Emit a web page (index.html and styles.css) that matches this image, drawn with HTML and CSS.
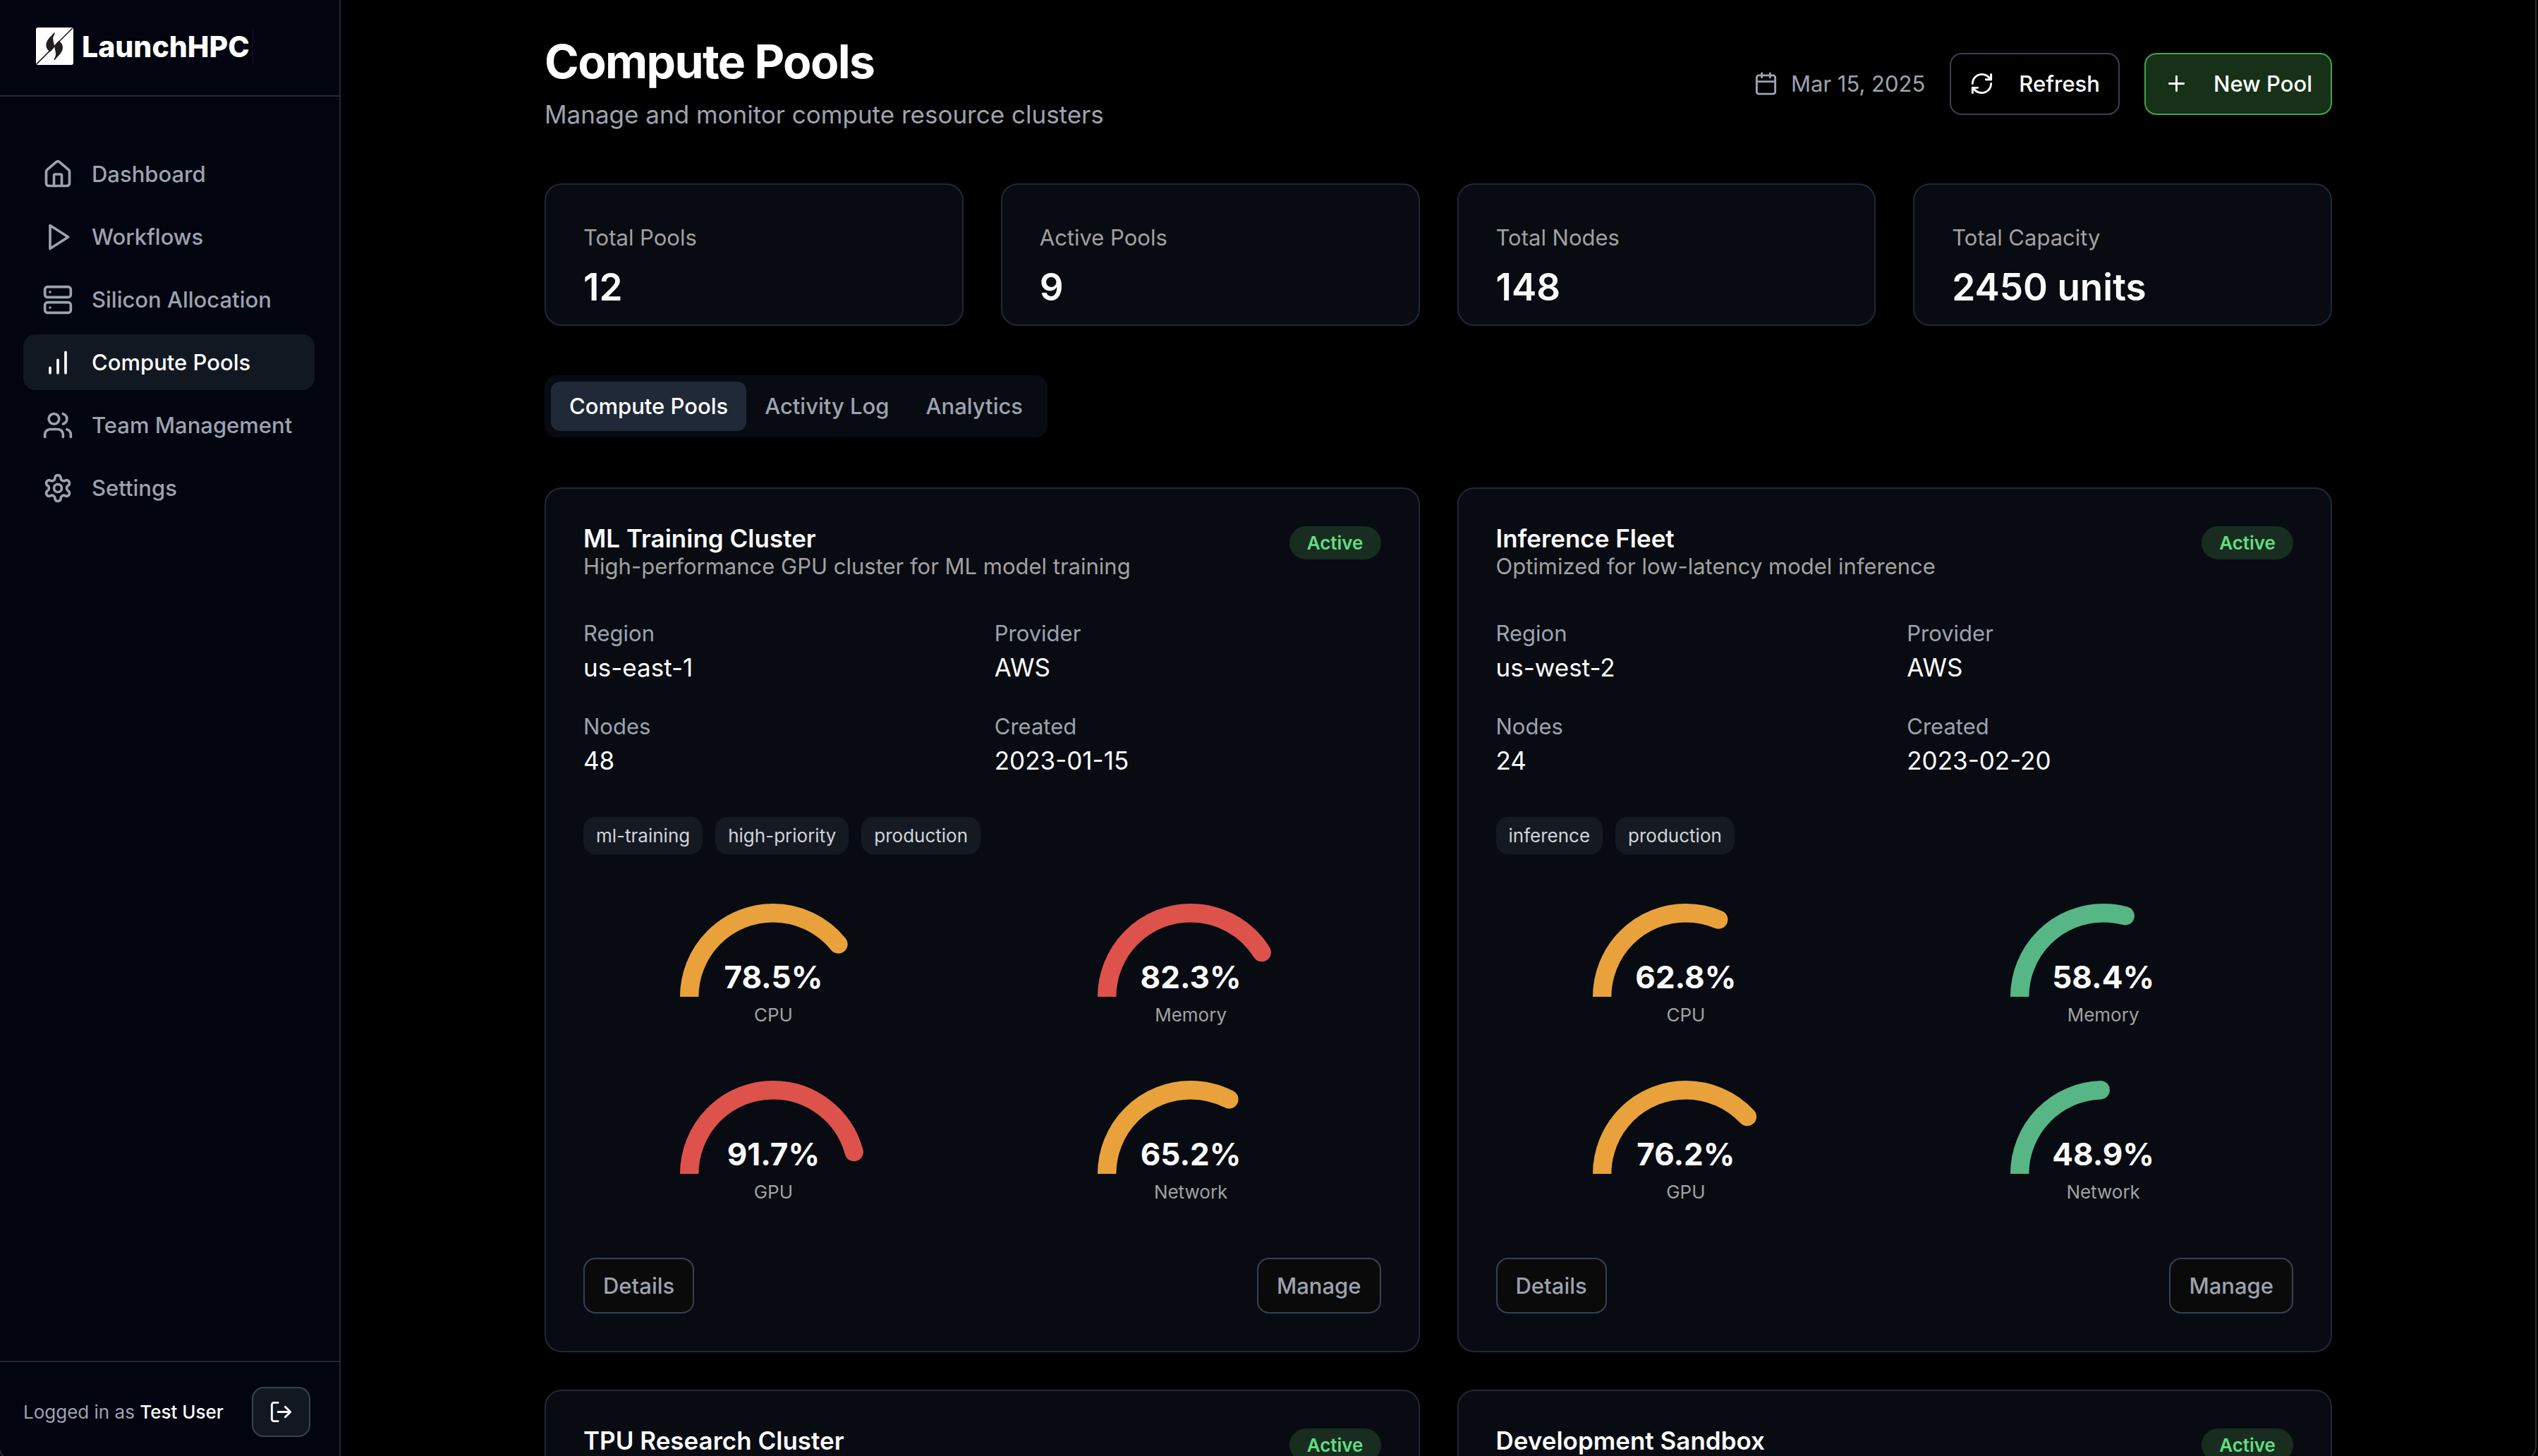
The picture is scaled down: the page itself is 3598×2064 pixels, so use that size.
FILE: index.html
```html
<!DOCTYPE html>
<html lang="en">
<head>
<meta charset="utf-8">
<title>Compute Pools</title>
<link rel="stylesheet" href="styles.css">
</head>
<body>
<div class="app">
  <aside class="sidebar">
    <div class="brand">
      <svg class="brand-mark" viewBox="0 0 159 159" aria-hidden="true">
        <rect width="159" height="159" rx="9" fill="#fff"/>
        <path d="M3 155 155 3" stroke="#231f20" stroke-width="5"/>
        <path id="flame" d="M77 22C66 36 43 52 43 76c0 12 7 21 17 28l18-20c1-14-7-30-5-42 2-8 6-13 8-19z" fill="#231f20"/>
        <use href="#flame" transform="rotate(180 78.500 80)"/>
      </svg>
      <span class="brand-name">LaunchHPC</span>
    </div>
    <nav class="nav">
      <a class="nav-item" href="#dashboard"><svg class="icon" viewBox="0 0 24 24"><path d="M15 21v-8a1 1 0 0 0-1-1h-4a1 1 0 0 0-1 1v8"/><path d="M3 10a2 2 0 0 1 .709-1.528l7-5.999a2 2 0 0 1 2.582 0l7 5.999A2 2 0 0 1 21 10v9a2 2 0 0 1-2 2H5a2 2 0 0 1-2-2z"/></svg>Dashboard</a>
      <a class="nav-item" href="#workflows"><svg class="icon" viewBox="0 0 24 24"><polygon points="6 3 20 12 6 21 6 3"/></svg>Workflows</a>
      <a class="nav-item" href="#silicon"><svg class="icon" viewBox="0 0 24 24"><rect width="20" height="8" x="2" y="2" rx="2"/><rect width="20" height="8" x="2" y="14" rx="2"/><path d="M6 6h.01M6 18h.01"/></svg>Silicon Allocation</a>
      <a class="nav-item is-active" href="#pools" aria-current="page"><svg class="icon" viewBox="0 0 24 24"><path d="M12 20V10M18 20V4M6 20v-4"/></svg>Compute Pools</a>
      <a class="nav-item" href="#team"><svg class="icon" viewBox="0 0 24 24"><path d="M16 21v-2a4 4 0 0 0-4-4H6a4 4 0 0 0-4 4v2"/><circle cx="9" cy="7" r="4"/><path d="M22 21v-2a4 4 0 0 0-3-3.870M16 3.130a4 4 0 0 1 0 7.750"/></svg>Team Management</a>
      <a class="nav-item" href="#settings"><svg class="icon" viewBox="0 0 24 24"><path d="M12.220 2h-.44a2 2 0 0 0-2 2v.18a2 2 0 0 1-1 1.730l-.43.25a2 2 0 0 1-2 0l-.15-.08a2 2 0 0 0-2.730.73l-.22.38a2 2 0 0 0 .73 2.730l.15.1a2 2 0 0 1 1 1.720v.51a2 2 0 0 1-1 1.740l-.15.09a2 2 0 0 0-.73 2.730l.22.38a2 2 0 0 0 2.730.73l.15-.08a2 2 0 0 1 2 0l.43.25a2 2 0 0 1 1 1.730V20a2 2 0 0 0 2 2h.44a2 2 0 0 0 2-2v-.18a2 2 0 0 1 1-1.730l.43-.25a2 2 0 0 1 2 0l.15.08a2 2 0 0 0 2.730-.73l.22-.39a2 2 0 0 0-.73-2.730l-.15-.08a2 2 0 0 1-1-1.740v-.5a2 2 0 0 1 1-1.740l.15-.09a2 2 0 0 0 .73-2.730l-.22-.38a2 2 0 0 0-2.730-.73l-.15.08a2 2 0 0 1-2 0l-.43-.25a2 2 0 0 1-1-1.730V4a2 2 0 0 0-2-2z"/><circle cx="12" cy="12" r="3"/></svg>Settings</a>
    </nav>
    <div class="account">
      <span class="account-text">Logged in as <strong>Test User</strong></span>
      <button class="logout" type="button" aria-label="Log out"><svg class="icon icon-sm" viewBox="0 0 24 24"><path d="M9 21H5a2 2 0 0 1-2-2V5a2 2 0 0 1 2-2h4M16 17l5-5-5-5M21 12H9"/></svg></button>
    </div>
  </aside>

  <main class="main">
    <div class="content">
      <header class="page-head">
        <div>
          <h1>Compute Pools</h1>
          <p class="subtitle">Manage and monitor compute resource clusters</p>
        </div>
        <div class="actions">
          <span class="date"><svg class="icon icon-sm" viewBox="0 0 24 24"><path d="M8 2v4M16 2v4M3 10h18"/><rect width="18" height="18" x="3" y="4" rx="2"/></svg>Mar 15, 2025</span>
          <button class="btn btn-head" type="button"><svg class="icon icon-sm" viewBox="0 0 24 24"><path d="M3 12a9 9 0 0 1 9-9 9.750 9.750 0 0 1 6.740 2.740L21 8"/><path d="M21 3v5h-5M21 12a9 9 0 0 1-9 9 9.750 9.750 0 0 1-6.740-2.740L3 16"/><path d="M8 16H3v5"/></svg>Refresh</button>
          <button class="btn btn-head btn-new" type="button"><svg class="icon icon-sm" viewBox="0 0 24 24"><path d="M5 12h14M12 5v14"/></svg>New Pool</button>
        </div>
      </header>

      <section class="stats">
        <div class="stat"><p class="stat-label">Total Pools</p><p class="stat-value">12</p></div>
        <div class="stat"><p class="stat-label">Active Pools</p><p class="stat-value">9</p></div>
        <div class="stat"><p class="stat-label">Total Nodes</p><p class="stat-value">148</p></div>
        <div class="stat"><p class="stat-label">Total Capacity</p><p class="stat-value">2450 units</p></div>
      </section>

      <div class="tabs" role="tablist">
        <button class="tab is-active" type="button" role="tab" aria-selected="true">Compute Pools</button>
        <button class="tab" type="button" role="tab" aria-selected="false">Activity Log</button>
        <button class="tab" type="button" role="tab" aria-selected="false">Analytics</button>
      </div>

      <section class="pools">
        <article class="pool">
          <div class="pool-head">
            <div><h2>ML Training Cluster</h2><p class="pool-desc">High-performance GPU cluster for ML model training</p></div>
            <span class="badge">Active</span>
          </div>
          <dl class="facts">
            <div><dt>Region</dt><dd>us-east-1</dd></div>
            <div><dt>Provider</dt><dd>AWS</dd></div>
            <div><dt>Nodes</dt><dd>48</dd></div>
            <div><dt>Created</dt><dd>2023-01-15</dd></div>
          </dl>
          <ul class="tags"><li>ml-training</li><li>high-priority</li><li>production</li></ul>
          <div class="gauges">
            <div class="gauge warn"><svg class="arc" viewBox="0 0 120 60"><path d="M6 60a54 54 0 0 1 108 0" pathLength="100" style="stroke-dasharray:78.5 200"/></svg><span class="gauge-value">78.5%</span><span class="gauge-label">CPU</span></div>
            <div class="gauge high"><svg class="arc" viewBox="0 0 120 60"><path d="M6 60a54 54 0 0 1 108 0" pathLength="100" style="stroke-dasharray:82.3 200"/></svg><span class="gauge-value">82.3%</span><span class="gauge-label">Memory</span></div>
            <div class="gauge high"><svg class="arc" viewBox="0 0 120 60"><path d="M6 60a54 54 0 0 1 108 0" pathLength="100" style="stroke-dasharray:91.7 200"/></svg><span class="gauge-value">91.7%</span><span class="gauge-label">GPU</span></div>
            <div class="gauge warn"><svg class="arc" viewBox="0 0 120 60"><path d="M6 60a54 54 0 0 1 108 0" pathLength="100" style="stroke-dasharray:65.2 200"/></svg><span class="gauge-value">65.2%</span><span class="gauge-label">Network</span></div>
          </div>
          <div class="pool-foot"><button class="btn btn-card" type="button">Details</button><button class="btn btn-card" type="button">Manage</button></div>
        </article>

        <article class="pool">
          <div class="pool-head">
            <div><h2>Inference Fleet</h2><p class="pool-desc">Optimized for low-latency model inference</p></div>
            <span class="badge">Active</span>
          </div>
          <dl class="facts">
            <div><dt>Region</dt><dd>us-west-2</dd></div>
            <div><dt>Provider</dt><dd>AWS</dd></div>
            <div><dt>Nodes</dt><dd>24</dd></div>
            <div><dt>Created</dt><dd>2023-02-20</dd></div>
          </dl>
          <ul class="tags"><li>inference</li><li>production</li></ul>
          <div class="gauges">
            <div class="gauge warn"><svg class="arc" viewBox="0 0 120 60"><path d="M6 60a54 54 0 0 1 108 0" pathLength="100" style="stroke-dasharray:62.8 200"/></svg><span class="gauge-value">62.8%</span><span class="gauge-label">CPU</span></div>
            <div class="gauge ok"><svg class="arc" viewBox="0 0 120 60"><path d="M6 60a54 54 0 0 1 108 0" pathLength="100" style="stroke-dasharray:58.4 200"/></svg><span class="gauge-value">58.4%</span><span class="gauge-label">Memory</span></div>
            <div class="gauge warn"><svg class="arc" viewBox="0 0 120 60"><path d="M6 60a54 54 0 0 1 108 0" pathLength="100" style="stroke-dasharray:76.2 200"/></svg><span class="gauge-value">76.2%</span><span class="gauge-label">GPU</span></div>
            <div class="gauge ok"><svg class="arc" viewBox="0 0 120 60"><path d="M6 60a54 54 0 0 1 108 0" pathLength="100" style="stroke-dasharray:48.9 200"/></svg><span class="gauge-value">48.9%</span><span class="gauge-label">Network</span></div>
          </div>
          <div class="pool-foot"><button class="btn btn-card" type="button">Details</button><button class="btn btn-card" type="button">Manage</button></div>
        </article>

        <article class="pool">
          <div class="pool-head"><h2>TPU Research Cluster</h2><span class="badge">Active</span></div>
        </article>
        <article class="pool">
          <div class="pool-head"><h2>Development Sandbox</h2><span class="badge">Active</span></div>
        </article>
      </section>
    </div>
  </main>
</div>
</body>
</html>
```
FILE: styles.css
```css
* { box-sizing: border-box; margin: 0; padding: 0; }

:root {
  --line: #1f2937;
  --line-strong: #374151;
  --text: #fafafa;
  --slate: #9ca3af;
  --muted: #a1a1a1;
  --panel: #080b12;
  --radius: 17px;
}

html, body { height: 100%; overflow: hidden; background: #000; }

body {
  font-family: Inter, "Liberation Sans", sans-serif;
  font-size: 31px;
  line-height: 44px;
  color: var(--text);
}

button { font: inherit; color: inherit; cursor: pointer; }

.app {
  display: flex;
  height: calc(100vh + 8px);
  margin: 0 2px 0 -2px;
  border: 2px solid #2e2e2e;
  border-top: 0;
  border-radius: 0 0 22px 22px;
  overflow: hidden;
}

.icon {
  flex: none;
  width: 44px;
  height: 44px;
  fill: none;
  stroke: currentColor;
  stroke-width: 2;
  stroke-linecap: round;
  stroke-linejoin: round;
}
.icon-sm { width: 35px; height: 35px; }

/* Sidebar */
.sidebar {
  flex: none;
  display: flex;
  flex-direction: column;
  width: 483px;
  background: #02040f;
  border-right: 2px solid var(--line);
}
.brand {
  display: flex;
  align-items: center;
  gap: 12px;
  height: 137px;
  padding: 0 51px 4px;
  border-bottom: 2px solid var(--line);
}
.brand-mark { width: 53px; height: 53px; }
.brand-name {
  padding-right: 4px;
  border-right: 1px solid #11131c;
  font-size: 41px;
  line-height: 48px;
  font-weight: 800;
  color: #fff;
}

.nav {
  flex: 1;
  display: flex;
  flex-direction: column;
  gap: 10px;
  padding: 70px 35px 35px 33px;
}
.nav-item {
  display: flex;
  align-items: center;
  gap: 26px;
  height: 79px;
  padding: 0 27px;
  border-radius: var(--radius);
  font-weight: 500;
  color: var(--slate);
  text-decoration: none;
}
.nav-item.is-active { background: #121822; color: #fff; }

.account {
  display: flex;
  align-items: center;
  justify-content: space-between;
  padding: 35px 41px 33px 33px;
  border-top: 2px solid var(--line);
}
.account-text { font-size: 26px; line-height: 35px; color: var(--slate); white-space: nowrap; }
.account-text strong { font-weight: 500; color: #fff; }
.logout {
  display: grid;
  place-items: center;
  width: 83px;
  height: 71px;
  border: 2px solid var(--line-strong);
  border-radius: var(--radius);
  background: #121822;
  color: #fff;
}

/* Page */
.main { flex: 1; min-width: 0; padding: 48px 33px 0 34px; background: #000; overflow: hidden; }
.content { max-width: 2534px; margin: 0 auto; }

.page-head {
  display: flex;
  align-items: center;
  justify-content: space-between;
  margin-bottom: 71px;
}
h1 { margin-bottom: 9px; font-size: 66px; line-height: 79px; font-weight: 700; letter-spacing: -0.025em; color: #fff; }
.subtitle { font-size: 35px; line-height: 53px; color: var(--slate); }
.actions { display: flex; align-items: center; gap: 35px; }
.date { display: flex; align-items: center; gap: 18px; color: var(--slate); }

.btn { border: 2px solid var(--line-strong); border-radius: var(--radius); font-weight: 500; }
.btn-head {
  display: flex;
  align-items: center;
  gap: 35px;
  height: 88px;
  padding: 0 26px;
  background: #000;
  color: #fff;
}
.btn-new { background: #163118; border-color: #3fa34d; }
.btn-card { height: 79px; padding: 0 26px; background: #0a0a0a; color: var(--slate); }

.stats { display: grid; grid-template-columns: repeat(4, 1fr); gap: 53px; margin-bottom: 70px; }
.stat {
  padding: 53px 53px 18px;
  border: 2px solid var(--line);
  border-radius: 24px;
  background: var(--panel);
}
.stat-label { margin-bottom: 13px; color: var(--muted); }
.stat-value { font-size: 53px; line-height: 70px; font-weight: 600; }

.tabs {
  display: inline-flex;
  padding: 9px;
  margin-bottom: 71px;
  border-radius: var(--radius);
  background: var(--panel);
  vertical-align: top;
}
.tab {
  height: 70px;
  padding: 0 26px;
  border: 0;
  border-radius: 13px;
  background: none;
  font-weight: 500;
  color: var(--slate);
}
.tab.is-active { background: #1f2937; color: #fff; }

/* Pool cards */
.pools { display: grid; grid-template-columns: 1fr 1fr; gap: 53px; }
.pool {
  padding: 53px;
  border: 2px solid var(--line);
  border-radius: 24px;
  background: var(--panel);
}
.pool-head { display: flex; align-items: flex-start; justify-content: space-between; }
h2 { font-size: 35px; line-height: 35px; font-weight: 600; }
.pool-desc { color: var(--muted); }
.badge {
  padding: 6px 25px;
  border-radius: 24px;
  background: #182d20;
  font-size: 26px;
  line-height: 35px;
  font-weight: 600;
  color: #62de80;
}

.facts { display: grid; grid-template-columns: 1fr 1fr; gap: 35px; margin: 51px 0 53px; }
dt { color: var(--slate); }
dd { font-size: 35px; line-height: 53px; color: #fff; }

.tags { display: flex; gap: 18px; list-style: none; }
.tags li {
  padding: 9px 18px;
  border-radius: var(--radius);
  background: #151922;
  font-size: 26px;
  line-height: 35px;
  color: #d1d5db;
}

.gauges { display: grid; grid-template-columns: 1fr 1fr; gap: 76px 53px; margin: 70px 0 76px; }
.gauge { display: grid; justify-items: center; row-gap: 8px; }
.arc { grid-area: 1 / 1; width: 264px; height: 132px; fill: none; overflow: hidden; }
.arc path { stroke: currentColor; stroke-width: 12; stroke-linecap: round; }
.gauge-value {
  grid-area: 1 / 1;
  align-self: end;
  font-size: 44px;
  line-height: 56px;
  font-weight: 700;
  color: var(--text);
}
.gauge-label { font-size: 26px; line-height: 35px; color: var(--muted); }
.warn { color: #e9a23b; }
.high { color: #de524c; }
.ok { color: #56b686; }

.pool-foot { display: flex; justify-content: space-between; }
```
